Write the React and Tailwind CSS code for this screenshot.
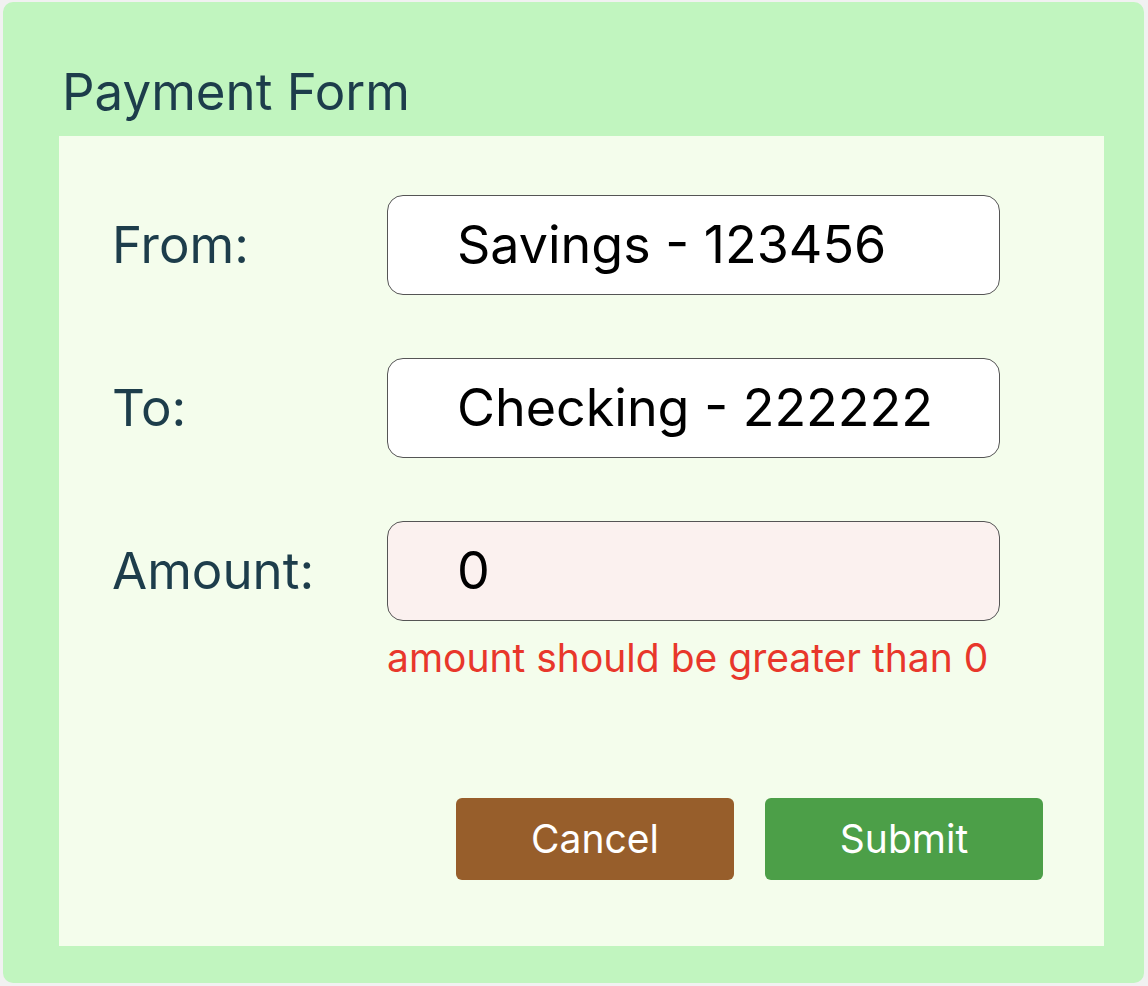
export default function App() {
  const font = { fontFamily: "Inter, 'Noto Sans', sans-serif" };
  return (
    <div className="w-[1148px] h-[986px] bg-[#f1f1f1] pt-[2px] pl-[3px]" style={font}>
      <div className="w-[1141px] h-[981px] bg-[#c1f5bf] rounded-[10px] pl-[56px] pr-[40px] flex flex-col">
        <div className="h-[134px] flex items-start pt-[60px] pl-[3px]">
          <h1 className="text-[51px] leading-[60px] text-[#1d3d4b]">Payment Form</h1>
        </div>
        <div className="w-[1045px] h-[810px] bg-[#f4fdec] pt-[59px] pl-[53px] flex flex-col">
          {[
            ["From:", "Savings - 123456", "bg-white"],
            ["To:", "Checking - 222222", "bg-white"],
            ["Amount:", "0", "bg-[#fbf1ef]"],
          ].map(([label, value, bg], i) => (
            <div key={label} className={"flex items-center h-[100px] " + (i > 0 ? "mt-[63px]" : "")}>
              <div className="w-[275px] text-[51px] leading-[60px] text-[#1d3d4b]">{label}</div>
              <div className={"w-[613px] h-[100px] rounded-[16px] border border-[#555] flex items-center pl-[69px] text-[52px] leading-[60px] text-black " + bg}>
                {value}
              </div>
            </div>
          ))}
          <div className="pl-[275px] mt-[14px] text-[39px] leading-[46px] text-[#e8372b]">
            amount should be greater than 0
          </div>
          <div className="flex gap-[31px] pl-[344px] mt-[117px]">
            <button className="w-[278px] h-[82px] rounded-[6px] bg-[#975e2b] text-white text-[39px] leading-[46px]">Cancel</button>
            <button className="w-[278px] h-[82px] rounded-[6px] bg-[#4c9f48] text-white text-[39px] leading-[46px]">Submit</button>
          </div>
        </div>
      </div>
    </div>
  );
}
